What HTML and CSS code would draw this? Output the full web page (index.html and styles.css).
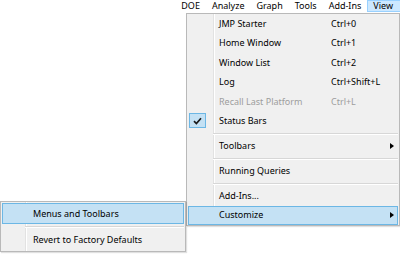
FILE: index.html
```html
<!DOCTYPE html>
<html>
<head>
<meta charset="utf-8">
<link rel="stylesheet" href="styles.css">
</head>
<body>
<div class="screen">
  <div class="menubar">
    <span class="mb-item">DOE</span>
    <span class="mb-item">Analyze</span>
    <span class="mb-item">Graph</span>
    <span class="mb-item">Tools</span>
    <span class="mb-item">Add-Ins</span>
    <span class="mb-item active">View</span>
  </div>

  <div class="menu main-menu">
    <div class="mi"><span class="ic"></span><span class="lbl">JMP Starter</span><span class="sc">Ctrl+0</span><span class="ar"></span></div>
    <div class="mi"><span class="ic"></span><span class="lbl">Home Window</span><span class="sc">Ctrl+1</span><span class="ar"></span></div>
    <div class="mi"><span class="ic"></span><span class="lbl">Window List</span><span class="sc">Ctrl+2</span><span class="ar"></span></div>
    <div class="mi"><span class="ic"></span><span class="lbl">Log</span><span class="sc">Ctrl+Shift+L</span><span class="ar"></span></div>
    <div class="mi disabled"><span class="ic"></span><span class="lbl">Recall Last Platform</span><span class="sc">Ctrl+L</span><span class="ar"></span></div>
    <div class="mi"><span class="ic"><span class="check"><svg width="9" height="8" viewBox="0 0 9 8"><path d="M1 4.2 L3.4 6.6 L8 1.2" fill="none" stroke="#1a1a1a" stroke-width="1.7"/></svg></span></span><span class="lbl">Status Bars</span><span class="sc"></span><span class="ar"></span></div>
    <div class="sep"></div>
    <div class="mi"><span class="ic"></span><span class="lbl">Toolbars</span><span class="sc"></span><span class="ar"><span class="tri"></span></span></div>
    <div class="sep"></div>
    <div class="mi"><span class="ic"></span><span class="lbl">Running Queries</span><span class="sc"></span><span class="ar"></span></div>
    <div class="sep"></div>
    <div class="mi"><span class="ic"></span><span class="lbl">Add-Ins...</span><span class="sc"></span><span class="ar"></span></div>
    <div class="mi hl"><span class="ic"></span><span class="lbl">Customize</span><span class="sc"></span><span class="ar"><span class="tri"></span></span></div>
  </div>

  <div class="menu sub-menu">
    <div class="mi hl tall"><span class="ic"></span><span class="lbl">Menus and Toolbars</span></div>
    <div class="sep wide"></div>
    <div class="mi"><span class="ic"></span><span class="lbl">Revert to Factory Defaults</span></div>
  </div>
</div>
</body>
</html>
```

FILE: styles.css
```css
html, body {
  margin: 0;
  padding: 0;
  background: #ffffff;
}

.screen {
  position: relative;
  width: 400px;
  height: 254px;
  overflow: hidden;
  background: #ffffff;
  font-family: "Noto Sans", "DejaVu Sans", sans-serif;
  font-size: 9px;
  color: #000;
}

.menubar {
  display: flex;
  justify-content: flex-end;
  height: 13px;
  align-items: stretch;
}

.mb-item {
  display: flex;
  align-items: center;
  padding: 0 6px;
  line-height: 12px;
  box-sizing: border-box;
  height: 12px;
}

.mb-item.active {
  background: #cce8ff;
  border: 1px solid #99d1ff;
  border-right: none;
  padding: 0 7px 0 5px;
}

.menu {
  position: absolute;
  background: #f0f0f0;
  border: 1px solid #b9b9b9;
  box-sizing: border-box;
  box-shadow: 1px 1px 1px rgba(0, 0, 0, 0.12);
  display: flex;
  flex-direction: column;
}

.menu::before {
  content: "";
  position: absolute;
  top: 0;
  bottom: 0;
  width: 1px;
  background: #e2e2e2;
  border-right: 1px solid #ffffff;
}

.main-menu {
  left: 186px;
  top: 13px;
  width: 214px;
  height: 213px;
  padding: 0 1px;
}

.main-menu::before {
  left: 26px;
}

.sub-menu {
  left: 0;
  top: 201px;
  width: 186px;
  height: 51px;
  padding: 1px;
}

.sub-menu::before {
  left: 24px;
}

.mi {
  position: relative;
  display: grid;
  grid-template-columns: 30px 112px 1fr 12px;
  align-items: center;
  height: 19.5px;
  box-sizing: border-box;
  border: 1px solid transparent;
  white-space: nowrap;
  z-index: 1;
}

.sub-menu .mi {
  grid-template-columns: 30px 1fr;
  height: 20px;
}

.sub-menu .mi.tall {
  height: 21px;
}

.mi.hl {
  background: #c4e1f4;
  border-color: #6cb7e5;
}

.mi.disabled {
  color: #9d9d9d;
}

.ic {
  display: flex;
  align-items: center;
  height: 100%;
}

.check {
  display: flex;
  align-items: center;
  justify-content: center;
  width: 17px;
  height: 15px;
  box-sizing: border-box;
  background: #c4e1f4;
  border: 1px solid #6cb7e5;
  margin-left: 0;
}

.lbl {
  line-height: 12px;
}

.sc {
  line-height: 12px;
}

.ar {
  display: flex;
  align-items: center;
  justify-content: flex-end;
  padding-right: 3px;
}

.tri {
  width: 0;
  height: 0;
  border-left: 4px solid #000;
  border-top: 3.5px solid transparent;
  border-bottom: 3.5px solid transparent;
}

.sep {
  position: relative;
  height: 5.5px;
  flex: none;
}

.sep::after {
  content: "";
  position: absolute;
  left: 25px;
  right: 0;
  top: 2px;
  height: 1px;
  background: #d7d7d7;
  border-bottom: 1px solid #ffffff;
}

.sep.wide {
  height: 6px;
}

.sep.wide::after {
  left: 23px;
  top: 2px;
}
```
